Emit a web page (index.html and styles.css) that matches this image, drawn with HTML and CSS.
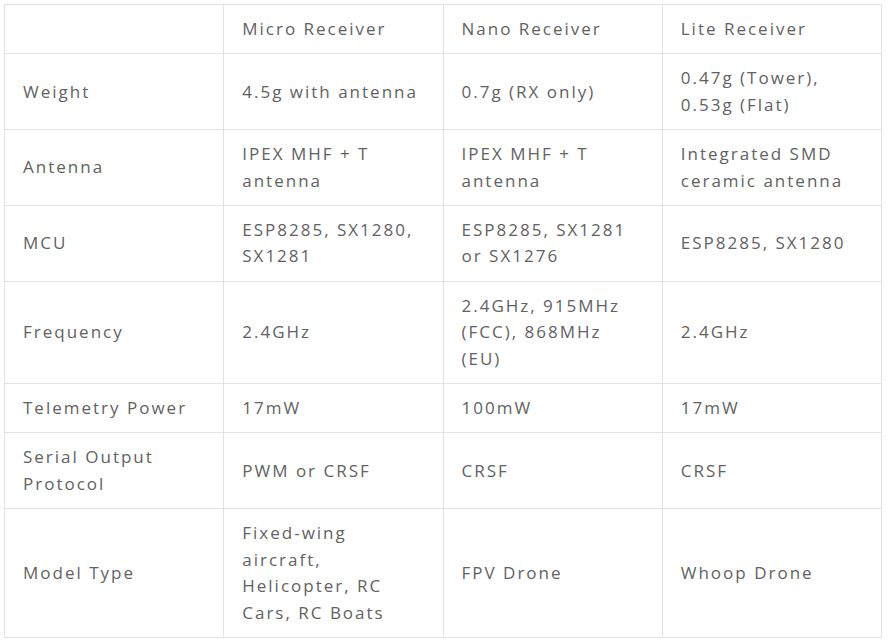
FILE: index.html
```html
<!DOCTYPE html>
<html lang="en">
<head>
<meta charset="utf-8">
<title>Receiver comparison</title>
<link rel="stylesheet" href="styles.css">
</head>
<body>
<table class="spec-table">
  <colgroup>
    <col class="col"><col class="col"><col class="col"><col class="col">
  </colgroup>
  <thead>
    <tr><th></th><th>Micro Receiver</th><th>Nano Receiver</th><th>Lite Receiver</th></tr>
  </thead>
  <tbody>
    <tr><td>Weight</td><td>4.5g with antenna</td><td>0.7g (RX only)</td><td>0.47g (Tower), 0.53g (Flat)</td></tr>
    <tr><td>Antenna</td><td>IPEX MHF + T antenna</td><td>IPEX MHF + T antenna</td><td>Integrated SMD ceramic antenna</td></tr>
    <tr><td>MCU</td><td>ESP8285, SX1280, SX1281</td><td>ESP8285, SX1281 or SX1276</td><td>ESP8285, SX1280</td></tr>
    <tr><td>Frequency</td><td>2.4GHz</td><td>2.4GHz, 915MHz (FCC), 868MHz (EU)</td><td>2.4GHz</td></tr>
    <tr><td>Telemetry Power</td><td>17mW</td><td>100mW</td><td>17mW</td></tr>
    <tr><td>Serial Output Protocol</td><td>PWM or CRSF</td><td>CRSF</td><td>CRSF</td></tr>
    <tr><td>Model Type</td><td>Fixed-wing aircraft, Helicopter, RC Cars, RC Boats</td><td>FPV Drone</td><td>Whoop Drone</td></tr>
  </tbody>
</table>
</body>
</html>
```
FILE: styles.css
```css
html, body {
  margin: 0;
  background: #ffffff;
}
body {
  padding: 4px;
  font-family: "Open Sans", "Noto Sans", sans-serif;
  font-size: 17px;
  letter-spacing: 2px;
  color: #626262;
}
.spec-table {
  border-collapse: collapse;
  table-layout: fixed;
  width: 878px;
}
.spec-table .col {
  width: 25%;
}
.spec-table th,
.spec-table td {
  border: 1px solid #e2e2e2;
  padding: 11px 18px;
  line-height: 26.4px;
  text-align: left;
  vertical-align: middle;
  font-weight: 400;
}
```
